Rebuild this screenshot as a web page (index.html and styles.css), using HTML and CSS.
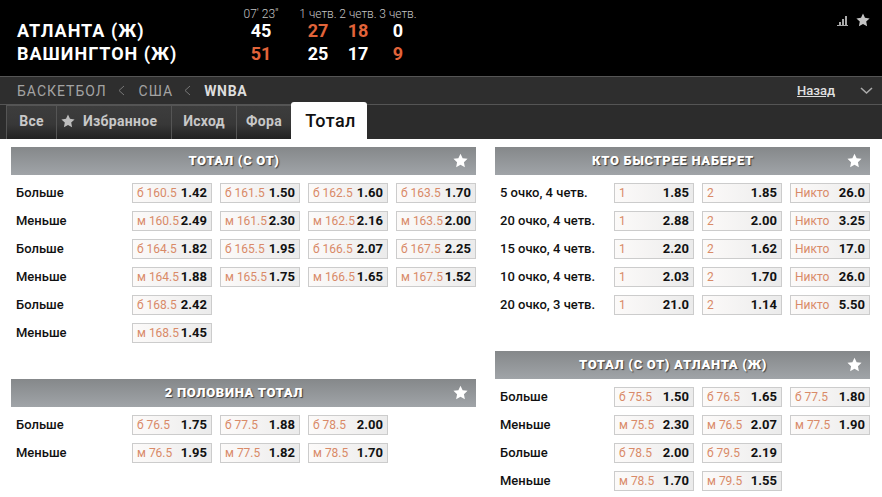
FILE: index.html
```html
<!DOCTYPE html>
<html lang="ru">
<head>
  <meta charset="UTF-8" />
  <meta name="viewport" content="width=device-width, initial-scale=1.0"/>
  <title>WNBA</title>
  <link rel="stylesheet" href="styles.css">
</head>
<body>

  <header class="score-bar">
    <div class="score-grid">
      <span></span>
      <span class="small">07' 23"</span>
      <span></span>
      <span class="small">1 четв.</span>
      <span class="small">2 четв.</span>
      <span class="small">3 четв.</span>

      <span class="team">АТЛАНТА (Ж)</span>
      <span class="num">45</span>
      <span></span>
      <span class="num hot">27</span>
      <span class="num hot">18</span>
      <span class="num">0</span>

      <span class="team">ВАШИНГТОН (Ж)</span>
      <span class="num hot">51</span>
      <span></span>
      <span class="num">25</span>
      <span class="num">17</span>
      <span class="num hot">9</span>
    </div>
    <div class="score-icons">
      <svg width="11" height="11" viewBox="0 0 11 11"><path d="M0 10h11v1H0zM2 7h2v3H2zM5 4h2v6H5zM8 1h2v9H8z" fill="#a9a9a9"/></svg>
      <svg width="14" height="14" viewBox="0 0 24 24"><path d="M12 1l3.4 7.3 7.9 1-5.8 5.4 1.5 7.9L12 18.7l-7 3.9 1.5-7.9L.7 9.3l7.9-1z" fill="#c4c4c4"/></svg>
    </div>
  </header>

  <nav class="crumbs">
    <span class="crumb">БАСКЕТБОЛ</span>
    <svg class="crumb-arrow" width="7" height="11" viewBox="0 0 7 11"><path d="M6 1L1 5.5 6 10" fill="none" stroke="#777" stroke-width="1"/></svg>
    <span class="crumb">США</span>
    <svg class="crumb-arrow" width="7" height="11" viewBox="0 0 7 11"><path d="M6 1L1 5.5 6 10" fill="none" stroke="#777" stroke-width="1"/></svg>
    <span class="crumb current">WNBA</span>
    <a class="back" href="#">Назад</a>
    <svg class="back-arrow" width="13" height="8" viewBox="0 0 13 8"><path d="M1 1l5.5 5L12 1" fill="none" stroke="#aaa" stroke-width="1.6"/></svg>
  </nav>

  <div class="tabs">
    <a class="tab tab-all" href="#">Все</a>
    <a class="tab tab-fav" href="#"><svg width="14" height="14" viewBox="0 0 24 24"><path d="M12 1l3.4 7.3 7.9 1-5.8 5.4 1.5 7.9L12 18.7l-7 3.9 1.5-7.9L.7 9.3l7.9-1z" fill="#bdbdbd"/></svg>Избранное</a>
    <a class="tab tab-win" href="#">Исход</a>
    <a class="tab tab-hcp" href="#">Фора</a>
    <a class="tab active" href="#">Тотал</a>
  </div>

  <main class="markets">
    <div class="col col-left">
      <section class="market">
        <h3 class="market-head">ТОТАЛ (С ОТ)<svg class="fav" width="15" height="15" viewBox="0 0 24 24"><path d="M12 1l3.4 7.3 7.9 1-5.8 5.4 1.5 7.9L12 18.7l-7 3.9 1.5-7.9L.7 9.3l7.9-1z" fill="#fff"/></svg></h3>
        <div class="row four">
          <span class="label">Больше</span>
          <a class="bet"><span class="line">б 160.5</span><b>1.42</b></a>
          <a class="bet"><span class="line">б 161.5</span><b>1.50</b></a>
          <a class="bet"><span class="line">б 162.5</span><b>1.60</b></a>
          <a class="bet"><span class="line">б 163.5</span><b>1.70</b></a>
        </div>
        <div class="row four">
          <span class="label">Меньше</span>
          <a class="bet"><span class="line">м 160.5</span><b>2.49</b></a>
          <a class="bet"><span class="line">м 161.5</span><b>2.30</b></a>
          <a class="bet"><span class="line">м 162.5</span><b>2.16</b></a>
          <a class="bet"><span class="line">м 163.5</span><b>2.00</b></a>
        </div>
        <div class="row four">
          <span class="label">Больше</span>
          <a class="bet"><span class="line">б 164.5</span><b>1.82</b></a>
          <a class="bet"><span class="line">б 165.5</span><b>1.95</b></a>
          <a class="bet"><span class="line">б 166.5</span><b>2.07</b></a>
          <a class="bet"><span class="line">б 167.5</span><b>2.25</b></a>
        </div>
        <div class="row four">
          <span class="label">Меньше</span>
          <a class="bet"><span class="line">м 164.5</span><b>1.88</b></a>
          <a class="bet"><span class="line">м 165.5</span><b>1.75</b></a>
          <a class="bet"><span class="line">м 166.5</span><b>1.65</b></a>
          <a class="bet"><span class="line">м 167.5</span><b>1.52</b></a>
        </div>
        <div class="row four">
          <span class="label">Больше</span>
          <a class="bet"><span class="line">б 168.5</span><b>2.42</b></a>
        </div>
        <div class="row four">
          <span class="label">Меньше</span>
          <a class="bet"><span class="line">м 168.5</span><b>1.45</b></a>
        </div>
      </section>

      <section class="market">
        <h3 class="market-head">2 ПОЛОВИНА ТОТАЛ<svg class="fav" width="15" height="15" viewBox="0 0 24 24"><path d="M12 1l3.4 7.3 7.9 1-5.8 5.4 1.5 7.9L12 18.7l-7 3.9 1.5-7.9L.7 9.3l7.9-1z" fill="#fff"/></svg></h3>
        <div class="row four">
          <span class="label">Больше</span>
          <a class="bet"><span class="line">б 76.5</span><b>1.75</b></a>
          <a class="bet"><span class="line">б 77.5</span><b>1.88</b></a>
          <a class="bet"><span class="line">б 78.5</span><b>2.00</b></a>
        </div>
        <div class="row four">
          <span class="label">Меньше</span>
          <a class="bet"><span class="line">м 76.5</span><b>1.95</b></a>
          <a class="bet"><span class="line">м 77.5</span><b>1.82</b></a>
          <a class="bet"><span class="line">м 78.5</span><b>1.70</b></a>
        </div>
      </section>
    </div>

    <div class="col col-right">
      <section class="market">
        <h3 class="market-head">КТО БЫСТРЕЕ НАБЕРЕТ<svg class="fav" width="15" height="15" viewBox="0 0 24 24"><path d="M12 1l3.4 7.3 7.9 1-5.8 5.4 1.5 7.9L12 18.7l-7 3.9 1.5-7.9L.7 9.3l7.9-1z" fill="#fff"/></svg></h3>
        <div class="row three">
          <span class="label">5 очко, 4 четв.</span>
          <a class="bet"><span class="line">1</span><b>1.85</b></a>
          <a class="bet"><span class="line">2</span><b>1.85</b></a>
          <a class="bet"><span class="line">Никто</span><b>26.0</b></a>
        </div>
        <div class="row three">
          <span class="label">20 очко, 4 четв.</span>
          <a class="bet"><span class="line">1</span><b>2.88</b></a>
          <a class="bet"><span class="line">2</span><b>2.00</b></a>
          <a class="bet"><span class="line">Никто</span><b>3.25</b></a>
        </div>
        <div class="row three">
          <span class="label">15 очко, 4 четв.</span>
          <a class="bet"><span class="line">1</span><b>2.20</b></a>
          <a class="bet"><span class="line">2</span><b>1.62</b></a>
          <a class="bet"><span class="line">Никто</span><b>17.0</b></a>
        </div>
        <div class="row three">
          <span class="label">10 очко, 4 четв.</span>
          <a class="bet"><span class="line">1</span><b>2.03</b></a>
          <a class="bet"><span class="line">2</span><b>1.70</b></a>
          <a class="bet"><span class="line">Никто</span><b>26.0</b></a>
        </div>
        <div class="row three">
          <span class="label">20 очко, 3 четв.</span>
          <a class="bet"><span class="line">1</span><b>21.0</b></a>
          <a class="bet"><span class="line">2</span><b>1.14</b></a>
          <a class="bet"><span class="line">Никто</span><b>5.50</b></a>
        </div>
      </section>

      <section class="market">
        <h3 class="market-head">ТОТАЛ (С ОТ) АТЛАНТА (Ж)<svg class="fav" width="15" height="15" viewBox="0 0 24 24"><path d="M12 1l3.4 7.3 7.9 1-5.8 5.4 1.5 7.9L12 18.7l-7 3.9 1.5-7.9L.7 9.3l7.9-1z" fill="#fff"/></svg></h3>
        <div class="row three">
          <span class="label">Больше</span>
          <a class="bet"><span class="line">б 75.5</span><b>1.50</b></a>
          <a class="bet"><span class="line">б 76.5</span><b>1.65</b></a>
          <a class="bet"><span class="line">б 77.5</span><b>1.80</b></a>
        </div>
        <div class="row three">
          <span class="label">Меньше</span>
          <a class="bet"><span class="line">м 75.5</span><b>2.30</b></a>
          <a class="bet"><span class="line">м 76.5</span><b>2.07</b></a>
          <a class="bet"><span class="line">м 77.5</span><b>1.90</b></a>
        </div>
        <div class="row three">
          <span class="label">Больше</span>
          <a class="bet"><span class="line">б 78.5</span><b>2.00</b></a>
          <a class="bet"><span class="line">б 79.5</span><b>2.19</b></a>
        </div>
        <div class="row three">
          <span class="label">Меньше</span>
          <a class="bet"><span class="line">м 78.5</span><b>1.70</b></a>
          <a class="bet"><span class="line">м 79.5</span><b>1.55</b></a>
        </div>
      </section>
    </div>
  </main>

</body>
</html>
```

FILE: styles.css
```css
html, body {
  margin: 0;
  padding: 0;
  background: #fff;
}

body {
  font-family: Roboto, "Liberation Sans", sans-serif;
  color: #111;
  overflow: hidden;
}

/* score header */
.score-bar {
  height: 76px;
  background: #000;
  display: flex;
  justify-content: space-between;
  box-sizing: border-box;
  padding: 8px 12px 0 17px;
}

.score-grid {
  display: grid;
  grid-template-columns: 224px 40px 17px 40px 40px 40px;
  grid-template-rows: 11px 23px 23px;
  align-items: center;
  justify-items: center;
}

.small {
  font-size: 12px;
  font-weight: 300;
  color: #c4c4c4;
  white-space: nowrap;
}

.team {
  justify-self: start;
  font-size: 18px;
  font-weight: 700;
  letter-spacing: 1px;
  color: #fff;
  white-space: nowrap;
}

.num {
  font-size: 18px;
  font-weight: 700;
  color: #fff;
}

.hot {
  color: #e2643a;
}

.score-icons {
  display: flex;
  align-items: center;
  gap: 8px;
  height: 14px;
  margin-top: 5px;
}

/* breadcrumbs */
.crumbs {
  height: 29px;
  box-sizing: border-box;
  background: #2e2e2e;
  border-top: 1px solid #555;
  border-bottom: 1px solid #555;
  display: flex;
  align-items: center;
  padding: 0 9px 0 17px;
}

.crumb {
  font-size: 14px;
  letter-spacing: 1px;
  color: #a3a3a3;
}

.current {
  font-weight: 700;
  letter-spacing: 0.7px;
  color: #ddd;
}

.crumb-arrow {
  margin: 0 14px 0 11px;
}

.crumb-arrow + .current {
  margin-left: -1px;
}

.back {
  margin-left: auto;
  font-size: 13px;
  font-weight: 500;
  color: #e0e0e0;
}

.back-arrow {
  margin-left: 25px;
}

/* tabs */
.tabs {
  height: 34px;
  background: #2c2c2c;
  display: flex;
  align-items: flex-end;
  padding-left: 6px;
}

.tab {
  height: 34px;
  box-sizing: border-box;
  padding-bottom: 3px;
  display: flex;
  align-items: center;
  justify-content: center;
  font-size: 14px;
  font-weight: 700;
  letter-spacing: 0.3px;
  color: #c8c8c8;
  text-decoration: none;
  border-top: 1px solid #555;
  border-left: 1px solid #555;
  background: linear-gradient(to bottom, #3d3d3d, #383838 55%, #222);
}

.tab-all { width: 50px; }
.tab-win { width: 65px; }
.tab-hcp { width: 55px; }

.tab-fav {
  width: 115px;
  justify-content: flex-start;
  gap: 8px;
  padding-left: 4px;
}

.active {
  width: 76px;
  height: 37px;
  margin-top: -3px;
  padding: 0 0 0 3px;
  border: none;
  border-radius: 3px 3px 0 0;
  background: #fff;
  color: #111;
  font-size: 18px;
  font-weight: 500;
  letter-spacing: 0.4px;
}

/* markets */
.markets {
  display: flex;
  gap: 19px;
  padding: 8px 12px 0 11px;
}

.col-left { width: 465px; }
.col-right { width: 375px; }

.market {
  margin-bottom: 36px;
}

.market:last-child {
  margin-bottom: 0;
}

.market-head {
  position: relative;
  height: 28px;
  margin: 0 0 8px;
  padding-right: 19px;
  background: linear-gradient(to bottom, #85888a, #a0a4a8);
  font-size: 13px;
  font-weight: 900;
  line-height: 28px;
  letter-spacing: 0.7px;
  text-align: center;
  color: #fff;
  text-shadow: 1px 1px 1px rgba(0, 0, 0, 0.6);
}

.fav {
  position: absolute;
  right: 8px;
  top: 6px;
}

.row {
  display: grid;
  column-gap: 8px;
  height: 20px;
  margin-bottom: 8px;
  align-items: center;
}

.row:last-child {
  margin-bottom: 0;
}

.four {
  grid-template-columns: 113px repeat(4, 80px);
}

.three {
  grid-template-columns: 111px repeat(3, 80px);
}

.label {
  padding: 0 0 2px 5px;
  font-size: 13px;
  font-weight: 500;
  white-space: nowrap;
}

.bet {
  height: 20px;
  box-sizing: border-box;
  border: 1px solid #ccc;
  background: linear-gradient(to right, #fcfaf9, #ebebeb);
  display: flex;
  align-items: center;
  justify-content: space-between;
  padding: 0 4px 1px 4px;
  font-size: 13px;
}

.line {
  font-size: 12px;
  font-weight: 400;
  color: #d98a68;
  white-space: nowrap;
}

.bet b {
  font-weight: 700;
  color: #111;
}
```
